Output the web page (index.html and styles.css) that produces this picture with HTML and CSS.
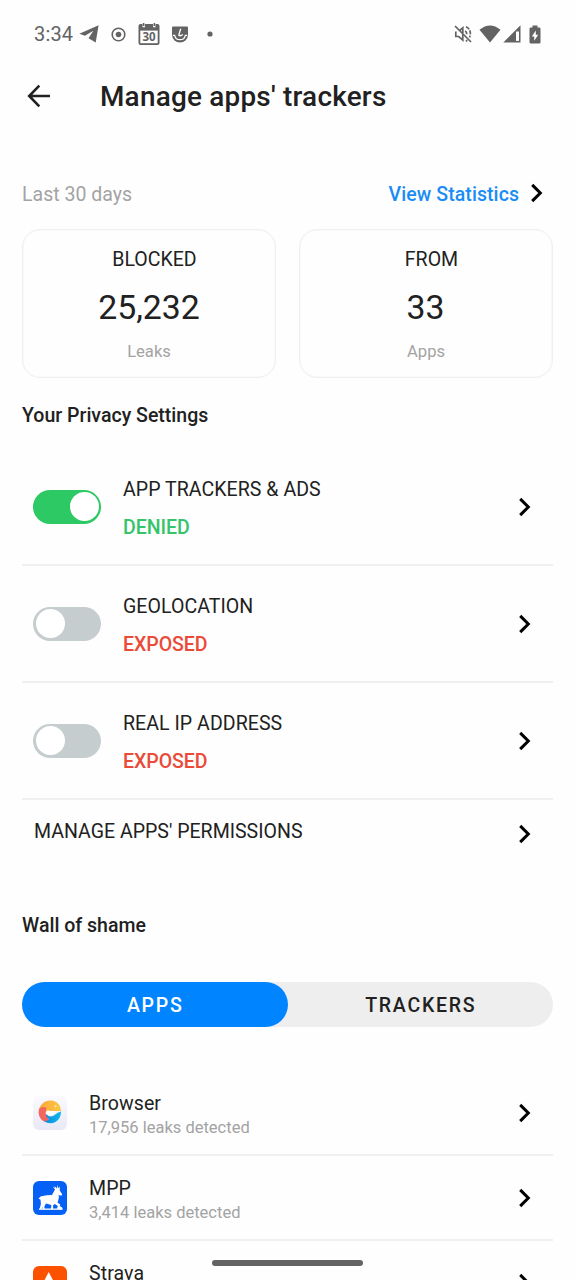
FILE: index.html
```html
<!DOCTYPE html>
<html lang="en">
<head>
<meta charset="utf-8">
<title>Manage apps' trackers</title>
<link rel="stylesheet" href="styles.css">
</head>
<body>
<svg class="defs" width="0" height="0" aria-hidden="true">
  <symbol id="chevron" viewBox="0 0 14 20"><path d="M2.2 1.9 10.3 10 2.2 18.1" fill="none" stroke="#000" stroke-width="3"/></symbol>
</svg>
<div class="screen">
  <div class="status">
    <span class="clock">3:34</span>
    <svg class="st-telegram" width="20" height="18" viewBox="0 0 20 18"><path d="M.3 8.8 19.6.3 16.7 17.4 9.5 13.2 14.3 5.8 6 10.800Z" fill="#636363"/></svg>
    <svg class="st-record" width="15" height="15" viewBox="0 0 15 15"><circle cx="7.5" cy="7.5" r="6.3" fill="none" stroke="#636363" stroke-width="1.6"/><circle cx="7.5" cy="7.5" r="2.8" fill="#636363"/></svg>
    <svg class="st-cal" width="22" height="22" viewBox="0 0 22 22"><path d="M2.5 1h2v3.2h2.4V1h8.2v3.2h2.4V1h2Q21.5 1 21.5 3v17q0 2-2 2h-17q-2 0-2-2V3q0-2 2-2Z" fill="#636363"/><path d="M2.3 7.6h17.4v12.6H2.3Z" fill="#fff"/><path d="M4.8 0h1.6v3H4.8ZM15.6 0h1.6v3h-1.6Z" fill="#636363"/><text x="11" y="17.800" text-anchor="middle" class="cal-day">30</text></svg>
    <svg class="st-shield" width="18" height="17" viewBox="0 0 18 17"><path d="M2 .5h14q1 0 1 1v7a8 8 0 0 1-16 0v-7q0-1 1-1Z" fill="#636363"/><path d="M2 9.300h1.700a5.400 5.400 0 0 0 10.600 0H16" fill="none" stroke="#fff" stroke-width="1.200"/><path d="M9.7 2.8 7.8 9.3q1.8 1.2 4-.8" fill="none" stroke="#fff" stroke-width="1.3"/></svg>
    <svg class="st-dot" width="6" height="6" viewBox="0 0 6 6"><circle cx="3" cy="3" r="2.6" fill="#636363"/></svg>
    <span class="spacer"></span>
    <svg class="st-mute" width="18" height="18" viewBox="0 0 18 18"><g fill="none" stroke="#636363" stroke-width="1.7"><path d="M1 1 17 17"/><path d="M1.8 6.5v5h3l4 3.6V9M5.7 5.5 8.8 2.9v5.2"/><path d="M11.2 5.8q2 1.6 1.5 4.7M12 1.8q5 2.5 4.3 7.8-.2 1.6-.8 2.8M11.8 16.2l1.5-.9" stroke-dasharray="4 1.2"/></g></svg>
    <svg class="st-wifi" width="22" height="18" viewBox="0 0 22 18"><path d="M.5 4.7Q11-3.9 21.5 4.7L11 17.5Z" fill="#636363"/></svg>
    <svg class="st-cell" width="18" height="18" viewBox="0 0 18 18"><path d="M.3 17.5 17.5.3v17.2Z" fill="#636363"/><path d="M13 6.5h3v9.4h-3Z" fill="#fff"/></svg>
    <svg class="st-batt" width="12" height="19" viewBox="0 0 12 19"><path d="M3.5.5h5v2h1.7q1.3 0 1.3 1.3v13.4q0 1.3-1.3 1.3H1.8Q.5 18.500.5 17.200V3.800Q.5 2.500 1.800 2.500h1.700Z" fill="#636363"/><path d="M6.800 5.500 2.800 11.500h2.400V15.800L9.200 9.700H6.800Z" fill="#fff"/></svg>
  </div>

  <header class="topbar">
    <svg width="24" height="24" viewBox="0 0 24 24"><path d="M12.300 1.600 2.200 12l10.100 10.400M2.400 12H23" fill="none" stroke="#212121" stroke-width="2.600"/></svg>
    <h1>Manage apps' trackers</h1>
  </header>

  <main>
    <div class="period">
      <span class="muted">Last 30 days</span>
      <a class="stats-link">View Statistics</a>
      <svg class="chev" width="14" height="20"><use href="#chevron"/></svg>
    </div>
    <div class="cards">
      <div class="card"><span class="label">BLOCKED</span><span class="num">25,232</span><span class="unit">Leaks</span></div>
      <div class="card"><span class="label">FROM</span><span class="num">33</span><span class="unit">Apps</span></div>
    </div>

    <h2 class="privacy-title">Your Privacy Settings</h2>
    <div class="setting">
      <span class="toggle on"></span>
      <div class="txt"><span>APP TRACKERS &amp; ADS</span><b class="ok">DENIED</b></div>
      <svg class="chev" width="14" height="20"><use href="#chevron"/></svg>
    </div>
    <div class="setting">
      <span class="toggle"></span>
      <div class="txt"><span>GEOLOCATION</span><b class="bad">EXPOSED</b></div>
      <svg class="chev" width="14" height="20"><use href="#chevron"/></svg>
    </div>
    <div class="setting">
      <span class="toggle"></span>
      <div class="txt"><span>REAL IP ADDRESS</span><b class="bad">EXPOSED</b></div>
      <svg class="chev" width="14" height="20"><use href="#chevron"/></svg>
    </div>
    <div class="permissions">
      <span>MANAGE APPS' PERMISSIONS</span>
      <svg class="chev" width="14" height="20"><use href="#chevron"/></svg>
    </div>

    <h2 class="wall-title">Wall of shame</h2>
    <div class="tabs"><span class="tab active">APPS</span><span class="tab">TRACKERS</span></div>

    <div class="app">
      <svg class="icon" width="34" height="34" viewBox="0 0 34 34">
        <defs>
          <linearGradient id="bg" x1="0" y1="0" x2="0" y2="1"><stop offset="0" stop-color="#fafaff"/><stop offset="1" stop-color="#e9e8f6"/></linearGradient>
          <linearGradient id="sun" x1="0" y1="0" x2="1" y2="0"><stop offset="0" stop-color="#fba43e"/><stop offset="1" stop-color="#fbc93f"/></linearGradient>
          <linearGradient id="sea" x1="0" y1="0" x2="1" y2="0"><stop offset="0" stop-color="#0b8bdc"/><stop offset="1" stop-color="#13b5ee"/></linearGradient>
        </defs>
        <rect width="34" height="34" rx="6" fill="url(#bg)"/>
        <path d="M6 13.500C8 7 13 4.200 18 4.600c6 .5 10 5 10 10.400H18l-5 3-6-1Z" fill="url(#sun)"/>
        <path d="M6 13q4-3.500 7.500-1-2 5 1.500 8l1 6.500Q8.500 26 6.200 20 5 16 6 13Z" fill="#f2665f"/>
        <path d="M12.800 17.500Q16 22 21 19.500q4-3.500 7-4 0 7-5.500 10.500-6 3-11.500-1 5 0 4.500-2.500-2.500-1.500-2.700-4.500Z" fill="url(#sea)"/>
        <path d="M12.500 17.200q.2-2.200 2.500-3 3 1.800 8.500 1.300-4.500 4-7.500 3.700-2.700-.2-3.500-2Z" fill="#fff"/>
        <circle cx="22.500" cy="10.300" r="1" fill="#fff3b0"/>
      </svg>
      <div class="info"><span class="name">Browser</span><span class="leaks">17,956 leaks detected</span></div>
      <svg class="chev" width="14" height="20"><use href="#chevron"/></svg>
    </div>
    <div class="app">
      <svg class="icon" width="34" height="34" viewBox="0 0 34 34">
        <rect width="34" height="34" rx="6" fill="#0560f5"/>
        <path d="M5.500 17.500 8 15.200l6-.9 5-.3 3-5.500-2.200-3 2.400 1.500-.7-2 2.500 2.500L24.500 4l1 3.500 1.500-2-.3 4 2.500 3.800-.8 1.500-3-.8.6 1.800-.8 3.700-.7 2 2.800 2-1 2.500-.8 2h-1.700l1-3-3-2-1.800 1.500.2 3.800H18l.3-4.300-5.300-1.500-1.700 3 .5 2.800H9.500l.3-2.600L8.500 28H6.700l1.200-5.300-.4-4Z" fill="#fff"/>
        <path d="M6 27.500h23.500v1.300H6Z" fill="#fff"/>
        <path d="m26.500 24.700 2.800 2v1.500h-4.500Z" fill="#fff"/>
      </svg>
      <div class="info"><span class="name">MPP</span><span class="leaks">3,414 leaks detected</span></div>
      <svg class="chev" width="14" height="20"><use href="#chevron"/></svg>
    </div>
    <div class="app last">
      <svg class="icon" width="34" height="34" viewBox="0 0 34 34"><rect width="34" height="34" rx="6" fill="#fc5200"/><path d="M15.700 6 23 20h-4.300l-3-5.700-3 5.700H8.400Z" fill="#fff"/></svg>
      <div class="info"><span class="name">Strava</span></div>
      <svg class="chev" width="14" height="20"><use href="#chevron"/></svg>
    </div>
  </main>
  <div class="home-bar"></div>
</div>
</body>
</html>
```

FILE: styles.css
```css
* { box-sizing: border-box; }
body { margin: 0; background: #fff; }
.defs { display: block; }
.screen {
  position: relative;
  width: 575px;
  height: 1280px;
  overflow: hidden;
  background: #fefefe;
  font-family: Roboto, sans-serif;
  font-size: 19.55px;
  line-height: 24px;
  color: #212121;
}
.screen svg { display: block; flex: none; }

.status { display: flex; align-items: center; height: 68px; padding: 0 33px 0 34px; color: #636363; }
.clock { font-size: 20px; width: 45px; letter-spacing: 0.15px; }
.st-record { margin-left: 12px; }
.st-cal { margin-left: 12px; }
.st-shield { margin-left: 11px; }
.st-dot { margin-left: 18px; }
.cal-day { font: 700 11.5px "Noto Sans", sans-serif; fill: #636363; }
.spacer { flex: 1; }
.st-wifi { margin-left: 7px; }
.st-cell { margin-left: 2px; }
.st-batt { margin-left: 8px; margin-right: 1px; }

.topbar { display: flex; align-items: center; height: 56px; padding-left: 27px; gap: 49px; }
.topbar h1 { margin: 2px 0 0; font-size: 27.9px; line-height: 34px; font-weight: 500; letter-spacing: 0.23px; }

main { padding: 0 22px; }
.period { display: flex; align-items: center; height: 28px; margin-top: 56px; padding-top: 1px; padding-right: 9px; }
.period .chev { margin-left: 11px; margin-top: -3px; }
.muted { flex: 1; color: #a3a3a3; }
.stats-link { color: #1a8cf5; font-weight: 500; letter-spacing: 0.06px; }

.cards { display: grid; grid-template-columns: 1fr 1fr; gap: 23px; margin-top: 21px; }
.card {
  height: 149px;
  padding-top: 18px;
  border: 1.5px solid #f0f0f0;
  box-shadow: inset 0 0 0 0.5px #f4f4f4;
  border-radius: 18px;
  display: flex;
  flex-direction: column;
  align-items: center;
}
.label { padding-left: 11px; }
.num { font-size: 33.8px; line-height: 40px; margin-top: 16px; }
.card + .card .num { padding-right: 1px; }
.unit { font-size: 16.6px; line-height: 20px; margin-top: 14px; color: #a3a3a3; }

h2 { margin: 0; font-size: 19.55px; line-height: 24px; font-weight: 500; }
.privacy-title { margin-top: 26px; margin-bottom: 21px; }
.setting { display: flex; align-items: center; height: 117px; padding: 0 21px 0 11px; border-bottom: 2px solid #f0f0f0; }
.toggle { width: 68px; height: 34px; padding: 2px; border-radius: 17px; background: #c6cdcf; display: flex; }
.toggle::before { content: ""; width: 29px; height: 29px; margin: 0.5px; border-radius: 50%; background: #fff; }
.toggle.on { background: #2dc965; justify-content: flex-end; }
.txt { flex: 1; display: flex; flex-direction: column; gap: 14px; margin-left: 22px; padding-top: 5px; letter-spacing: 0.05px; }
.txt b { font-weight: 500; letter-spacing: -0.05px; }
.ok { color: #35c46a; }
.bad { color: #ea4b38; }

.permissions { display: flex; align-items: center; height: 64px; padding: 0 21px 0 12px; }
.permissions span { flex: 1; }
.permissions .chev { margin-top: 4px; }

.wall-title { margin-top: 50px; }
.tabs { display: flex; height: 45px; margin-top: 44px; border-radius: 23px; background: #eee; }
.tab { flex: 1; text-align: center; line-height: 47px; padding-left: 1px; font-weight: 500; letter-spacing: 1.75px; }
.tab.active { border-radius: 23px; background: #0084ff; color: #fff; }
.tabs + .app { margin-top: 44px; }

.app { display: flex; align-items: center; height: 85px; padding: 0 21px 0 11px; border-bottom: 2px solid #f0f0f0; }
.icon { margin-top: 1px; }
.info { flex: 1; display: flex; flex-direction: column; margin-left: 22px; padding-top: 7px; }
.name { letter-spacing: 0.08px; }
.leaks { font-size: 16.5px; color: #a3a3a3; }
.last .info { align-self: flex-start; padding-top: 21px; }

.home-bar { position: absolute; left: 212px; top: 1260px; width: 151px; height: 6px; border-radius: 3px; background: #636363; }
```
